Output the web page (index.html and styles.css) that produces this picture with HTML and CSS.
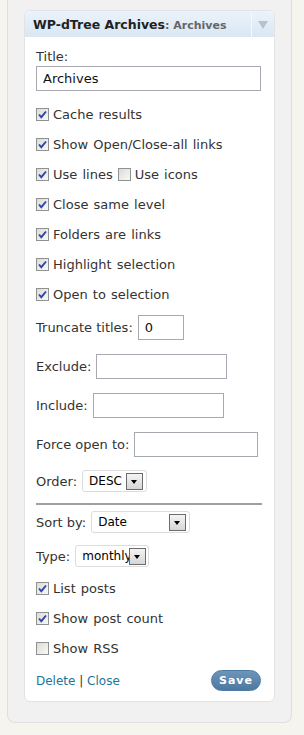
FILE: index.html
```html
<!DOCTYPE html>
<html lang="en">
<head>
    <meta charset="UTF-8">
    <title>WP-dTree Archives</title>
    <link rel="stylesheet" href="styles.css">
</head>
<body>
    <div class="sidebar">
        <div class="widget">
            <div class="widget-top">
                <h4>WP-dTree Archives<span class="in-title">: Archives</span></h4>
                <span class="toggle"><span class="arrow"></span></span>
            </div>
            <div class="widget-inside">
                <label class="title-label">Title:</label>
                <input class="text wide" type="text" value="Archives">

                <p class="check"><span class="cb on"><svg viewBox="0 0 11 11"><path d="M2 5.5 L4.3 8.2 L9 2.5"/></svg></span>Cache results</p>
                <p class="check"><span class="cb on"><svg viewBox="0 0 11 11"><path d="M2 5.5 L4.3 8.2 L9 2.5"/></svg></span>Show Open/Close-all links</p>
                <p class="check"><span class="cb on"><svg viewBox="0 0 11 11"><path d="M2 5.5 L4.3 8.2 L9 2.5"/></svg></span>Use lines <span class="cb off"></span>Use icons</p>
                <p class="check"><span class="cb on"><svg viewBox="0 0 11 11"><path d="M2 5.5 L4.3 8.2 L9 2.5"/></svg></span>Close same level</p>
                <p class="check"><span class="cb on"><svg viewBox="0 0 11 11"><path d="M2 5.5 L4.3 8.2 L9 2.5"/></svg></span>Folders are links</p>
                <p class="check"><span class="cb on"><svg viewBox="0 0 11 11"><path d="M2 5.5 L4.3 8.2 L9 2.5"/></svg></span>Highlight selection</p>
                <p class="check"><span class="cb on"><svg viewBox="0 0 11 11"><path d="M2 5.5 L4.3 8.2 L9 2.5"/></svg></span>Open to selection</p>

                <p class="field first">Truncate titles: <input class="text short" type="text" value="0"></p>
                <p class="field">Exclude: <input class="text mid" type="text"></p>
                <p class="field">Include: <input class="text mid" type="text"></p>
                <p class="field">Force open to: <input class="text force" type="text"></p>
                <p class="field sel">Order: <span class="select order">DESC<span class="drop"></span></span></p>

                <hr>

                <p class="field sel after-hr">Sort by: <span class="select sort">Date<span class="drop"></span></span></p>
                <p class="field sel type-row">Type: <span class="select type">monthly<span class="drop"></span></span></p>

                <p class="check first-list"><span class="cb on"><svg viewBox="0 0 11 11"><path d="M2 5.5 L4.3 8.2 L9 2.5"/></svg></span>List posts</p>
                <p class="check"><span class="cb on"><svg viewBox="0 0 11 11"><path d="M2 5.5 L4.3 8.2 L9 2.5"/></svg></span>Show post count</p>
                <p class="check"><span class="cb off"></span>Show RSS</p>

                <div class="widget-control">
                    <span class="links"><a href="#">Delete</a> | <a href="#">Close</a></span>
                    <button class="save">Save</button>
                </div>
            </div>
        </div>
    </div>
</body>
</html>
```

FILE: styles.css
```css
body {
    margin: 0;
    background-color: #f5f4ef;
    font-family: "DejaVu Sans", Verdana, sans-serif;
    font-size: 13px;
    color: #333;
}

.sidebar {
    box-sizing: border-box;
    margin-left: 7px;
    width: 285px;
    padding: 10px 16px 20px 16px;
    background-color: #f1f1f1;
    border: 1px solid #dfdfdf;
    border-top: none;
    border-radius: 0 0 8px 8px;
}

.widget {
    background-color: #fff;
    border: 1px solid #e3e3e3;
    border-radius: 6px;
}

.widget-top {
    display: flex;
    height: 26px;
    border-radius: 6px 6px 0 0;
    background: linear-gradient(#ebf3fa, #d9e7f4);
}

.widget-top h4 {
    flex: 1;
    margin: 0;
    padding-left: 8px;
    font-size: 12.5px;
    line-height: 27px;
    color: #222;
}

.in-title {
    color: #666;
    font-size: 11px;
}

.toggle {
    width: 22px;
    border-left: 1px solid #f4f8fc;
    display: flex;
    align-items: center;
    justify-content: center;
}

.arrow {
    width: 0;
    height: 0;
    border-left: 5px solid transparent;
    border-right: 5px solid transparent;
    border-top: 8px solid #b8c2cc;
    margin-top: 2px;
}

.widget-inside {
    padding: 12px 12px 10px 11px;
}

.title-label {
    display: block;
    line-height: 16px;
    margin-bottom: 1px;
}

input.text {
    box-sizing: border-box;
    height: 25px;
    border: 1px solid #a9a9b1;
    padding: 0 6px;
    font-family: "DejaVu Sans", Verdana, sans-serif;
    font-size: 13px;
    color: #111;
    vertical-align: middle;
}

.wide {
    width: 225px;
    margin-bottom: 8px;
}

.check {
    display: flex;
    align-items: center;
    height: 30px;
    margin: 0;
    word-spacing: 1px;
}

.cb {
    box-sizing: border-box;
    width: 13px;
    height: 13px;
    border: 1px solid #8f9193;
    background: linear-gradient(135deg, #dcdcd6, #f8f8f6);
    margin-right: 4px;
    flex-shrink: 0;
}

.check .off:not(:first-child) {
    margin-left: 5px;
}

.cb svg {
    display: block;
    width: 11px;
    height: 11px;
}

.cb path {
    fill: none;
    stroke: #2f44a8;
    stroke-width: 1.9;
}

.field {
    display: flex;
    align-items: center;
    height: 25px;
    margin: 14px 0 0 0;
}

.field.first {
    margin-top: 6px;
}

.field input {
    margin-left: 5px;
}

.short {
    width: 46px;
}

.mid {
    width: 131px;
}

.force {
    width: 124px;
}

.field.sel {
    height: 22px;
    margin-top: 13px;
}

.field.after-hr {
    margin-top: 6px;
}

.field.type-row {
    margin-top: 12px;
}

.select {
    box-sizing: border-box;
    position: relative;
    height: 22px;
    margin-left: 5px;
    padding-left: 6px;
    border: 1px solid #dcdcdc;
    border-radius: 3px;
    font-size: 12px;
    line-height: 20px;
    color: #000;
}

.order {
    width: 65px;
}

.sort {
    width: 99px;
}

.type {
    width: 74px;
    overflow: hidden;
    white-space: nowrap;
}

.drop {
    position: absolute;
    top: 2px;
    right: 3px;
    box-sizing: border-box;
    width: 17px;
    height: 17px;
    border: 1px solid #6c6c6c;
    background: linear-gradient(#f4f4f4, #d6d6d6);
}

.drop::after {
    content: "";
    position: absolute;
    left: 4px;
    top: 6px;
    border-left: 3.5px solid transparent;
    border-right: 3.5px solid transparent;
    border-top: 4px solid #000;
}

.type .drop {
    right: 2px;
}

hr {
    margin: 11px 0 0 0;
    border: none;
    border-top: 2px solid #a0a0a0;
    width: 226px;
}

.first-list {
    margin-top: 6px;
}

.widget-control {
    display: flex;
    justify-content: space-between;
    align-items: center;
    margin-top: 7px;
    padding-right: 1px;
}

.links {
    font-size: 12px;
    color: #333;
}

.links a {
    color: #21759b;
    text-decoration: none;
}

.save {
    width: 50px;
    height: 21px;
    padding: 0;
    border: 1px solid #4b7aa3;
    border-radius: 11px;
    background: linear-gradient(#6d95ba, #4d78a0);
    color: #fff;
    font-family: "DejaVu Sans", Verdana, sans-serif;
    font-size: 11px;
    font-weight: bold;
    letter-spacing: 1px;
}
```
